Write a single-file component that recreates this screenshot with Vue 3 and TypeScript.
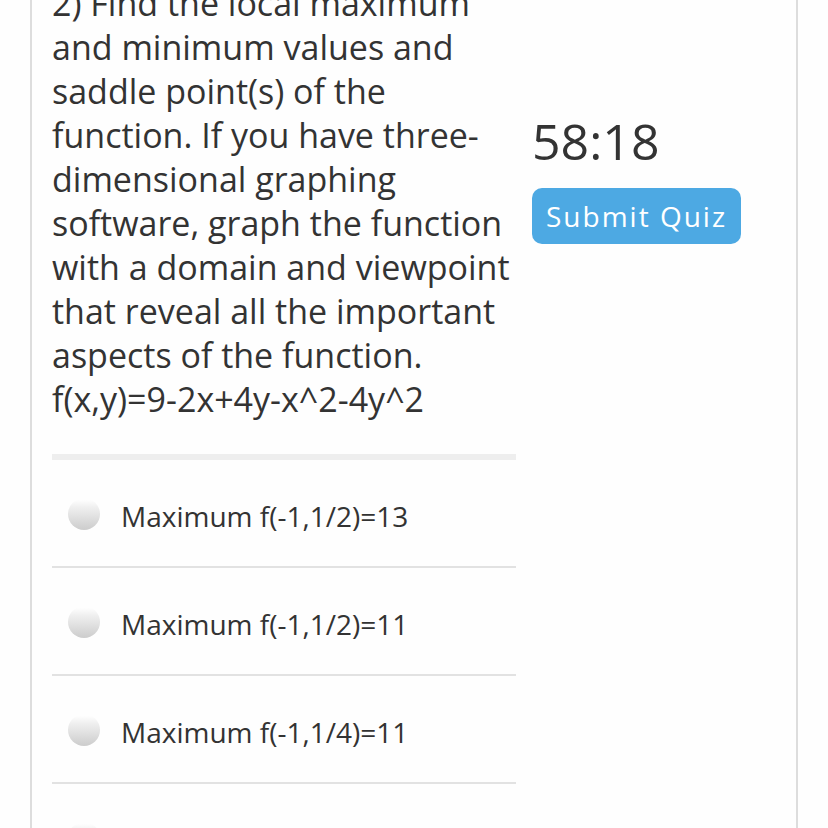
<script setup lang="ts">
import { ref } from 'vue'

const lines: string[] = [
  '2) Find the local maximum',
  'and minimum values and',
  'saddle point(s) of the',
  'function. If you have three-',
  'dimensional graphing',
  'software, graph the function',
  'with a domain and viewpoint',
  'that reveal all the important',
  'aspects of the function.',
  'f(x,y)=9-2x+4y-x^2-4y^2',
]
const answers: string[] = [
  'Maximum f(-1,1/2)=13',
  'Maximum f(-1,1/2)=11',
  'Maximum f(-1,1/4)=11',
  'Maximum f(-1,1/4)=13',
]
const selected = ref<number | null>(null)
</script>

<template>
  <div class="viewport">
    <main class="card">
      <section class="question">
        <h1 class="prompt">
          <span v-for="line in lines" :key="line" class="line">{{ line }}</span>
        </h1>
        <div class="answers" role="radiogroup" aria-label="Answers">
          <label v-for="(answer, i) in answers" :key="i" class="answer">
            <input v-model="selected" class="radio" type="radio" name="answer" :value="i" />
            <span class="answer-text">{{ answer }}</span>
          </label>
        </div>
      </section>
      <aside class="side">
        <div class="timer">58:18</div>
        <button class="submit" type="button">Submit Quiz</button>
      </aside>
    </main>
  </div>
</template>

<style>
body {
  margin: 0;
  background: #fefefe;
}
</style>

<style scoped>
.viewport {
  box-sizing: border-box;
  height: 100vh;
  padding: 0 30px;
  overflow: hidden;
  color: #333;
  font-family: 'Open Sans', sans-serif;
}
.card {
  display: grid;
  grid-template-columns: minmax(0, 464fr) minmax(0, 248fr);
  column-gap: 16px;
  align-items: start;
  padding: 0 16px 0 20px;
  border: 2px solid #ddd;
  border-width: 0 2px;
}
.prompt {
  margin: -19px 0 33px;
  font-size: 34px;
  font-weight: 400;
  line-height: 44px;
  white-space: nowrap;
}
.line {
  display: block;
}
.answers {
  border-top: 6px solid #eee;
}
.answer {
  display: flex;
  align-items: flex-start;
  box-sizing: border-box;
  height: 108px;
  padding: 36px 16px 0;
  gap: 21px;
  border-bottom: 2px solid #e2e2e2;
  font-size: 28px;
  line-height: 40px;
}
.radio {
  appearance: none;
  flex: none;
  width: 32px;
  height: 32px;
  margin: 2px 0 0;
  border-radius: 50%;
  background: linear-gradient(#fefefe 6%, #f0f0f0 28%, #ccc);
}
.radio:checked {
  box-shadow: inset 0 0 0 8px #4da9e3;
}
.side {
  padding-top: 111px;
}
.timer {
  font-size: 50px;
  line-height: 60px;
}
.submit {
  height: 56px;
  margin-top: 17px;
  padding: 0 14px;
  border: 0;
  border-radius: 10px;
  background: #4da9e3;
  color: #fff;
  font: 500 28px/54px 'Open Sans', sans-serif;
  letter-spacing: 2px;
}
</style>
